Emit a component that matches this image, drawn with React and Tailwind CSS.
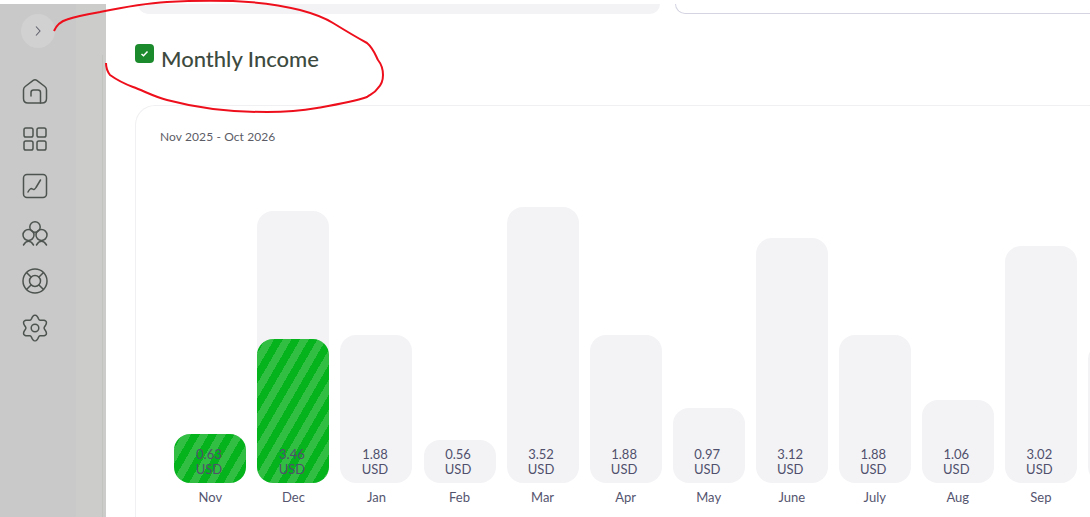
const BARS = [
  { month: 'Nov', value: '0.63', track: 49, fill: 49 },
  { month: 'Dec', value: '3.46', track: 272, fill: 144 },
  { month: 'Jan', value: '1.88', track: 148 },
  { month: 'Feb', value: '0.56', track: 43 },
  { month: 'Mar', value: '3.52', track: 276 },
  { month: 'Apr', value: '1.88', track: 148 },
  { month: 'May', value: '0.97', track: 75 },
  { month: 'June', value: '3.12', track: 245 },
  { month: 'July', value: '1.88', track: 148 },
  { month: 'Aug', value: '1.06', track: 83 },
  { month: 'Sep', value: '3.02', track: 237 },
  // only the edge of this bar is in view, its labels are past the window
  { track: 140 },
];

// six rounded lobes around the centre
const GEAR_PATH = Array.from({ length: 72 }, (_, i) => {
  const angle = (i / 72) * Math.PI * 2;
  const r = 11 + 1.9 * Math.cos(angle * 6);
  const x = 14 + r * Math.sin(angle);
  const y = 14 - r * Math.cos(angle);
  return `${i === 0 ? 'M' : 'L'}${x.toFixed(2)} ${y.toFixed(2)}`;
}).join(' ') + ' Z';

function NavIcon({ children }) {
  return (
    <svg width="28" height="28" viewBox="0 0 28 28" fill="none" stroke="#4d544f" strokeWidth="1.5" strokeLinecap="round" strokeLinejoin="round">
      {children}
    </svg>
  );
}

function Bar({ month, value, track, fill }) {
  return (
    <div className="flex w-[72px] shrink-0 flex-col items-center">
      <div className="relative flex w-full flex-col items-center justify-end rounded-[16px] bg-[#f3f3f6] pb-[6px] pr-[3px] text-[13px] leading-[15px] text-[#50506c]" style={{ height: track }}>
        {fill && (
          <div className="absolute inset-x-0 bottom-0 rounded-[16px] bg-[repeating-linear-gradient(120deg,#05b31c_0px,#05b31c_7.5px,#31be42_7.5px,#31be42_15px)]" style={{ height: fill }} />
        )}
        {value && <span className="relative">{value}</span>}
        {value && <span className="relative">USD</span>}
      </div>
      <span className="mt-[7px] h-[15px] text-[13px] leading-[15px] text-[#55556f]">{month}</span>
    </div>
  );
}

export default function App() {
  return (
    <div className="relative flex h-[517px] w-[1090px] overflow-hidden bg-white pt-1 font-['Lato',sans-serif]">
      <aside className="flex w-[106px] shrink-0">
        <nav className="flex w-[76px] flex-col items-center bg-[#c9c9c9] pt-[10px]">
          <button className="flex h-[34px] w-[34px] items-center justify-center rounded-full bg-[#d1d1d1]">
            <svg width="10" height="14" viewBox="0 0 10 14" fill="none" stroke="#62626f" strokeWidth="1.1">
              <path d="M3 2.5 7 7l-4 4.5" />
            </svg>
          </button>
          <div className="mr-[6px] mt-[30px] flex flex-col gap-[19.2px]">
            <NavIcon>
              <path d="M12.200 2.300c1.100-.8 2.500-.8 3.600 0l8 6.200c1.200.9 1.700 2 1.700 3.400v8.600c0 2.800-1.700 4.500-4.500 4.500H7c-2.800 0-4.500-1.700-4.500-4.500v-8.600c0-1.400.5-2.500 1.700-3.400Z" />
              <path d="M10 18v-3.500c0-1.500 1-2.500 2.500-2.500h4.500c1.500 0 2.500 1 2.500 2.500V25" />
            </NavIcon>
            <NavIcon>
              <rect x="3" y="3" width="9" height="9" rx="1.800" />
              <rect x="16" y="3" width="9" height="9" rx="1.800" />
              <rect x="3" y="16" width="9" height="9" rx="1.800" />
              <rect x="16" y="16" width="9" height="9" rx="1.800" />
            </NavIcon>
            <NavIcon>
              <rect x="2.500" y="2.500" width="23" height="23" rx="3.500" />
              <path d="M7 20c1.500-3 3-4 4.500-3 1.300 1 2.500.3 3.500-1.500l4.500-7.500" />
            </NavIcon>
            <NavIcon>
              <circle cx="14" cy="7" r="5.200" />
              <circle cx="7.500" cy="15" r="5.500" />
              <circle cx="20.500" cy="15" r="5.500" />
              <path d="M2.500 25c1.500-2.500 3-3.700 5-3.700s3.500 1.200 5 3.700M15.500 25c1.500-2.500 3-3.700 5-3.700s3.500 1.200 5 3.700" />
            </NavIcon>
            <NavIcon>
              <circle cx="14" cy="14" r="12" />
              <circle cx="14" cy="14" r="5.500" />
              <path d="M10 10 5.500 5.500M18 10l4.500-4.500M10 18l-4.500 4.500M18 18l4.500 4.500" />
            </NavIcon>
            <NavIcon>
              <circle cx="14" cy="14" r="3.800" />
              <path d={GEAR_PATH} />
            </NavIcon>
          </div>
        </nav>
        <div className="w-[26px] bg-[#cccdca]" />
        <div className="w-[4px] bg-[#cccdca]">
          <div className="mt-[51px] h-[462px] border-l border-[#c2c4c0]" />
        </div>
      </aside>

      <main className="min-w-0 flex-1">
        <div className="flex h-[10px] items-start">
          <div className="ml-[32px] h-[10px] w-[522px] shrink-0 rounded-b-[16px] bg-[#f3f3f6]" />
          <div className="ml-[15px] h-[10px] w-[500px] shrink-0 rounded-bl-[14px] border-b border-l border-[#d4d4e2]" />
        </div>

        <div className="ml-[29px] mt-[30px] flex h-[19px] items-center gap-[7px]">
          <span className="flex h-[19px] w-[19px] items-center justify-center rounded-[4px] bg-[#1a8a2c]">
            <svg width="9" height="9" viewBox="0 0 9 9" fill="none" stroke="#ffffff" strokeWidth="1.500">
              <path d="M1.500 5 3.500 6.800 7.500 2.500" />
            </svg>
          </span>
          <h1 className="mt-[11px] text-[22px] font-medium leading-[28px] text-[#3d4a40]">Monthly Income</h1>
        </div>

        <section className="ml-[29px] mt-[42px] h-[500px] w-[1000px] rounded-tl-[20px] border-l border-t border-[#f0f0f2] pl-[24px] pt-[23px]">
          <p className="text-[12px] leading-[15px] tracking-[0.1px] text-[#5c5c66]">Nov 2025 - Oct 2026</p>
          <div className="ml-[14.400px] mt-[70px] flex h-[291px] items-end gap-[11.050px]">
            {BARS.map((bar) => (
              <Bar key={bar.track + (bar.month ?? 'Oct')} {...bar} />
            ))}
          </div>
        </section>
      </main>

      {/* hand-drawn annotation on top of the page */}
      <svg className="pointer-events-none absolute left-0 top-0" width="1090" height="517" viewBox="0 0 1090 517" fill="none" stroke="#ee0f1c" strokeWidth="2">
        <path d="M54 31C57 24 62 21 67 19.500C78 15.500 88 14 100 12C122 7.500 142 3.500 167 2C190 .5 212 .5 233 1C258 2 280 5 300 10C315 14 325 18 333 23C346 31 356 37 367 43C373 48 375 54 378 60C382 65 383 69 383 75C383 80 381 85 378 88C375 93 371 94 367 97C352 102 334 105 317 108C300 111 284 112 267 112C248 112 230 111 213 109C197 107 182 104 167 100C155 97 144 91 133 87C125 84 117 80 110 75C107 71 106 67 106 63" />
      </svg>
    </div>
  );
}
